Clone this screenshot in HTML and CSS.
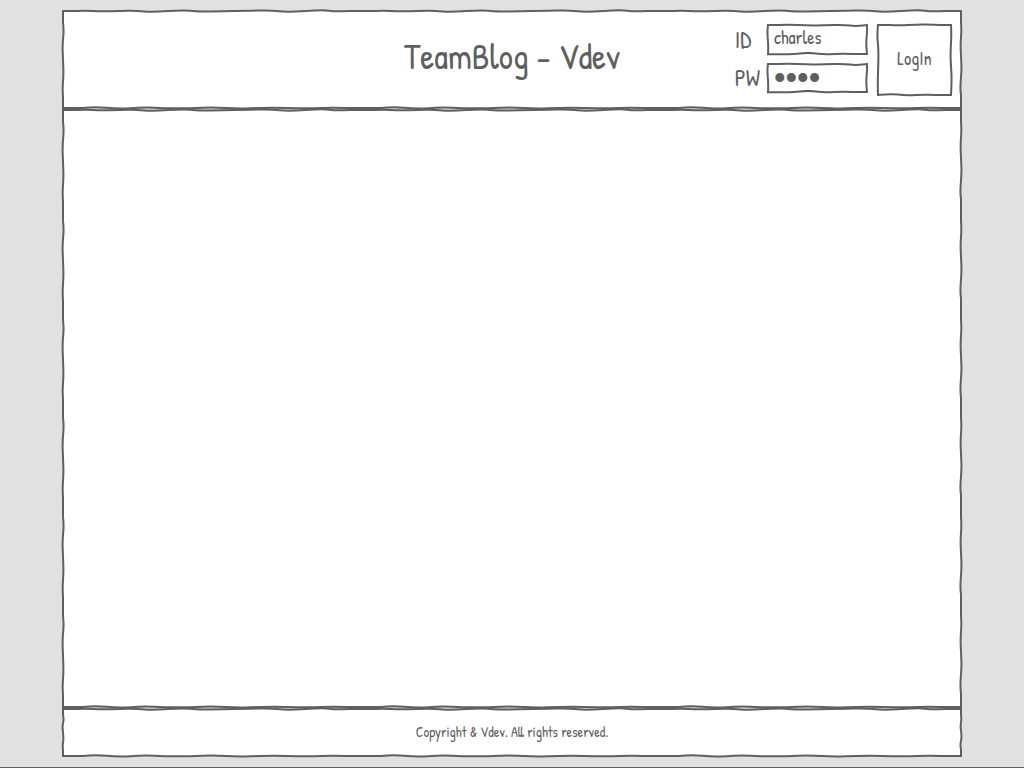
FILE: index.html
```html
<!DOCTYPE html>
<html lang="en">
<head>
  <meta charset="utf-8">
  <meta name="viewport" content="width=device-width, initial-scale=1">
  <title>TeamBlog - Vdev</title>
  <link rel="stylesheet" href="styles.css">
</head>
<body>
  <div class="page">
    <header class="panel header">
      <h1 class="title">TeamBlog - Vdev</h1>
      <form class="login">
        <div class="fields">
          <label class="label" for="user-id">ID</label>
          <input class="field" id="user-id" type="text" value="charles">
          <label class="label" for="user-pw">PW</label>
          <input class="field password" id="user-pw" type="password" value="1234">
        </div>
        <button class="submit" type="button">LogIn</button>
      </form>
    </header>
    <main class="panel content"></main>
    <footer class="panel footer">Copyright &amp; Vdev. All rights reserved.</footer>
  </div>
</body>
</html>
```

FILE: styles.css
```css
* {
  box-sizing: border-box;
}

body {
  margin: 0;
  background: #e1e1e1;
  color: #5f5f5f;
  font-family: "Patrick Hand", Lato, sans-serif;
}

.page {
  display: flex;
  flex-direction: column;
  min-height: 100vh;
  padding: 9px 61px;
  border-bottom: 1px solid #5f5f5f;
}

/* Hand-drawn outlines: the wavy stroke runs down the middle of a 4px border */
.panel {
  border: 4px solid transparent;
  border-image: url("data:image/svg+xml,%3Csvg xmlns='http://www.w3.org/2000/svg' width='308' height='108' viewBox='0 0 308 108'%3E%3Cpath d='M2 2H16Q24 1.5 32 2T50 2.2T68 1.8T84 2.4T108 2T130 1.8T150 2.4T174 2T198 1.6T220 2.3T246 2T270 1.7T290 2H306V14Q306.6 22 306 30T305.8 46T306.4 60T305.8 76T306 92V106H286Q274 105.4 262 106T238 106.2T214 105.8T190 106.3T166 106T142 105.7T118 106.3T94 105.8T70 106.2T46 105.8T22 106H2V94Q1.4 86 2 78T2.3 62T1.7 46T2.2 30T2 14Z' fill='%23fff' stroke='%235f5f5f' stroke-width='2'/%3E%3C/svg%3E") 4 / 4px round;
  background: #fff padding-box;
}

.panel + .panel {
  margin-top: -2px;
}

.header {
  display: grid;
  grid-template-columns: 1fr auto 1fr;
  align-items: start;
  padding: 10px 6px 9px;
}

.title {
  grid-column: 2;
  margin: 0;
  font-size: 35px;
  font-weight: 400;
  line-height: 68px;
}

.login {
  display: flex;
  justify-self: end;
  gap: 7px;
}

.fields {
  display: grid;
  grid-template-columns: auto 103px;
  align-content: start;
  align-items: center;
  gap: 6px;
}

.label {
  font-size: 23px;
  line-height: 24px;
}

.field {
  width: 100%;
  height: 33px;
  padding: 0 4px 4px;
  border: 4px solid transparent;
  border-image: url("data:image/svg+xml,%3Csvg xmlns='http://www.w3.org/2000/svg' width='103' height='33' viewBox='0 0 103 33'%3E%3Cpath d='M2 2H12Q22 1.5 32 2T50 2.4T68 2T84 2.6T101 2Q101.3 8 100.6 14T101 31H86Q78 30.4 68 31T50 30.5T34 30.5T18 31.2H2Q2.5 24 1.8 16T2 2Z' fill='%23fff' stroke='%235f5f5f' stroke-width='2'/%3E%3C/svg%3E") 4 / 4px round;
  background: #fff padding-box;
  color: inherit;
  font-family: inherit;
  font-size: 18px;
}

.password {
  height: 32px;
  padding-bottom: 0;
  font-family: "Liberation Sans", sans-serif;
  font-size: 33px;
}

.submit {
  width: 77px;
  height: 74px;
  padding: 0 0 4px;
  border: 4px solid transparent;
  border-image: url("data:image/svg+xml,%3Csvg xmlns='http://www.w3.org/2000/svg' width='77' height='74' viewBox='0 0 77 74'%3E%3Cpath d='M2 2H14Q23 2.5 32 2T50 1.6T64 2H75Q75.5 12 75 20T74.6 34T75.3 48T75 72H60Q50 71.5 40 72T22 71.6T2 72Q1.6 60 2 50T2.4 32T1.7 18T2 2Z' fill='%23fff' stroke='%235f5f5f' stroke-width='2'/%3E%3C/svg%3E") 4 / 4px round;
  background: #fff padding-box;
  color: inherit;
  font-family: inherit;
  font-size: 18px;
}

.content {
  flex: 1;
}

.footer {
  padding: 12px 6px 13px;
  font-size: 14px;
  line-height: 18px;
  text-align: center;
}
```
